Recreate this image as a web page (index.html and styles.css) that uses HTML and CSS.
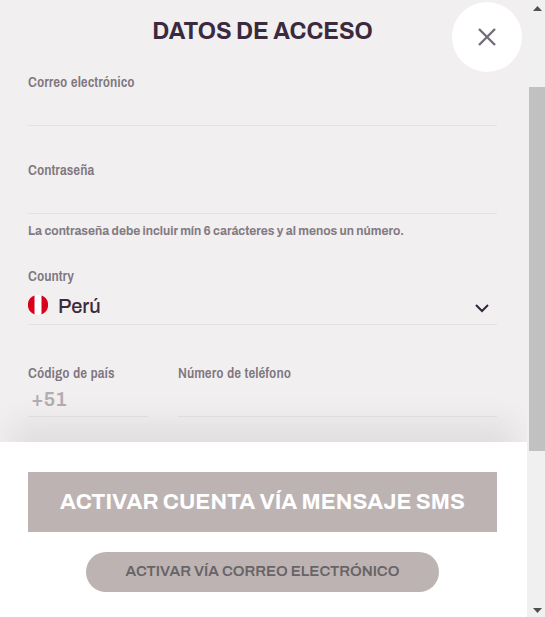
FILE: index.html
```html
<!DOCTYPE html>
<html lang="es">
<head>
  <meta charset="UTF-8">
  <meta name="viewport" content="width=device-width, initial-scale=1.0">
  <title>Datos de acceso</title>
  <link rel="stylesheet" href="styles.css">
</head>
<body>
  <form class="modal">
    <button type="button" class="close" aria-label="Cerrar">
      <svg width="18" height="18" viewBox="0 0 18 18"><path d="M1 1l16 16M17 1L1 17"/></svg>
    </button>
    <div class="fields">
      <h1>DATOS DE ACCESO</h1>
      <div class="field">
        <label for="email">Correo electrónico</label>
        <input id="email" type="email">
      </div>
      <div class="field">
        <label for="password">Contraseña</label>
        <input id="password" type="password" aria-describedby="password-hint">
        <p class="hint" id="password-hint">La contraseña debe incluir mín 6 carácteres y al menos un número.</p>
      </div>
      <div class="field country">
        <label for="country">Country</label>
        <div class="select">
          <svg class="flag" viewBox="0 0 20 20">
            <circle cx="10" cy="10" r="10" fill="#fff"/>
            <path d="M6.5 .6a10 10 0 0 0 0 18.8zM13.5 .6a10 10 0 0 1 0 18.8z" fill="#d9001b"/>
          </svg>
          <select id="country">
            <option>Perú</option>
          </select>
          <svg class="chevron" viewBox="0 0 14 9"><path d="M1 1l6 6 6-6"/></svg>
        </div>
      </div>
      <div class="phone">
        <div class="field prefix">
          <label for="prefix">Código de país</label>
          <input id="prefix" type="text" value="+51" disabled>
        </div>
        <div class="field number">
          <label for="phone">Número de teléfono</label>
          <input id="phone" type="tel">
        </div>
      </div>
    </div>
    <div class="actions">
      <button type="submit" class="btn-sms">ACTIVAR CUENTA VÍA MENSAJE SMS</button>
      <button type="button" class="btn-email">ACTIVAR VÍA CORREO ELECTRÓNICO</button>
    </div>
  </form>
  <div class="scrollbar" aria-hidden="true">
    <svg class="arrow" viewBox="0 0 9 5"><path d="M0 5L4.500 0L9 5z"/></svg>
    <div class="track"><div class="thumb"></div></div>
    <svg class="arrow" viewBox="0 0 9 5"><path d="M0 0h9L4.500 5z"/></svg>
  </div>
</body>
</html>
```

FILE: styles.css
```css
* { box-sizing: border-box; }
body {
  margin: 0;
  height: 100vh;
  display: flex;
  background: #f1eff0;
  color: #3b2a3e;
  font-family: Archivo, "Liberation Sans", Arial, sans-serif;
}
button, input, select { font-family: inherit; }
.modal {
  flex: 1;
  min-width: 0;
  position: relative;
  display: flex;
  flex-direction: column;
}
/* Close button sits over the top corner of the form */
.close {
  position: absolute;
  top: 2px;
  right: 5px;
  width: 70px;
  height: 70px;
  padding: 0;
  border: none;
  border-radius: 50%;
  background: #fff;
  display: flex;
  justify-content: center;
  align-items: center;
  cursor: pointer;
}
.close path { fill: none; stroke: #756c77; stroke-width: 2.4; }
.fields {
  flex: 1;
  padding: 18px 30px 24px 28px;
}
h1 {
  margin: 0 0 26px;
  font-size: 23px;
  font-weight: 700;
  line-height: 28px;
  text-align: center;
}
.field {
  display: flex;
  flex-direction: column;
  margin-bottom: 34px;
}
label {
  font-family: "Archivo Narrow", "Liberation Sans Narrow", "Arial Narrow", sans-serif;
  font-size: 15px;
  font-weight: 600;
  line-height: 20px;
  color: #7f777f;
}
input {
  width: 100%;
  height: 34px;
  padding: 0 3px 2px;
  border: none;
  border-bottom: 1px solid #e4e2e4;
  border-radius: 0;
  background: none;
  color: inherit;
  font-size: 20px;
  outline: none;
}
.hint {
  margin: 8px 0 -8px;
  font-size: 12px;
  font-weight: 700;
  line-height: 18px;
  color: #827b82;
}
.select {
  display: flex;
  align-items: center;
  height: 39px;
  padding-right: 8px;
  border-bottom: 1px solid #e4e2e4;
}
.flag { width: 20px; height: 20px; }
.select select {
  flex: 1;
  height: 100%;
  padding: 2px 10px 0;
  border: none;
  background: none;
  color: inherit;
  font-size: 20px;
  font-weight: 500;
  appearance: none;
  outline: none;
}
.chevron { width: 14px; height: 9px; margin-top: 6px; }
.chevron path { fill: none; stroke: #33243a; stroke-width: 2; }
.country { margin-bottom: 38px; }
.phone { display: flex; gap: 30px; }
.phone .field { margin-bottom: 0; }
.prefix { width: 120px; }
.prefix input { color: #b3adb1; font-weight: 600; }
.number { flex: 1; }
.actions {
  display: flex;
  flex-direction: column;
  align-items: center;
  gap: 20px;
  padding: 30px 30px 25px 28px;
  background: #fff;
  box-shadow: 0 -30px 30px -10px rgba(0,0,0,0.07);
  clip-path: inset(-50px 0 0 0);
}
.actions button {
  border: none;
  background: #bdb3b2;
  cursor: pointer;
}
.btn-sms {
  width: 100%;
  height: 60px;
  color: #fff;
  font-size: 22px;
  font-weight: 700;
}
.actions .btn-email {
  height: 40px;
  padding: 0 40px 2px;
  border-radius: 20px;
  color: #686466;
  font-size: 15px;
  font-weight: 600;
}
/* Scrollbar */
.scrollbar {
  width: 18px;
  padding: 6px 0 4px 2px;
  display: flex;
  flex-direction: column;
  align-items: center;
  background: #f0f0f0;
}
.arrow { width: 9px; height: 5px; fill: #505050; }
.track { flex: 1; width: 100%; }
.thumb { height: 61%; margin-top: 76px; background: #c1c1c1; }
```
